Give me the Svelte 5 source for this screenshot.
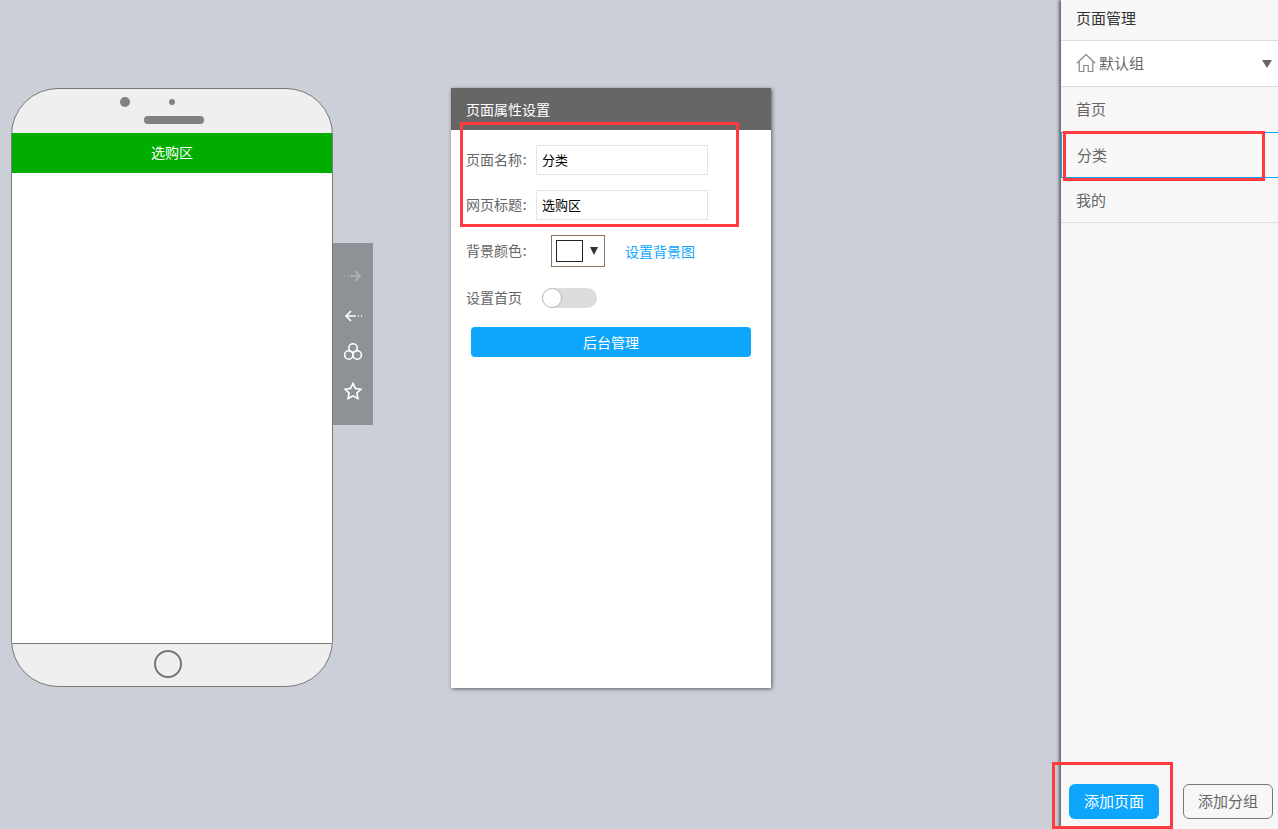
<script>
  const pages = [
    { name: '首页', active: false },
    { name: '分类', active: true },
    { name: '我的', active: false }
  ]
</script>

<div class="stage">
  <div class="phone">
    <div class="phone-top">
      <div class="sensors">
        <span class="camera"></span>
        <span class="sensor"></span>
      </div>
      <span class="speaker"></span>
    </div>
    <div class="phone-title">选购区</div>
    <div class="phone-body"></div>
    <div class="phone-bottom"><span class="home-btn"></span></div>
  </div>

  <div class="tools">
    <svg class="tool dim" viewBox="0 0 20 20">
      <path d="M1 10h1M4 10h1M7 10h10M12 5l5 5-5 5" />
    </svg>
    <svg class="tool" viewBox="0 0 20 20">
      <path d="M19 10h-1M16 10h-1M13 10H3M8 5l-5 5 5 5" />
    </svg>
    <svg class="tool" viewBox="0 0 20 20">
      <circle cx="10" cy="6" r="4.2" />
      <circle cx="5.8" cy="13" r="4.2" />
      <circle cx="14.2" cy="13" r="4.2" />
    </svg>
    <svg class="tool" viewBox="0 0 20 20">
      <path d="M10 2.4l2.4 5 5.5.8-4 3.8 1 5.5-4.9-2.7-4.9 2.7 1-5.5-4-3.8 5.500-.8z" />
    </svg>
  </div>

  <div class="settings">
    <div class="settings-head">页面属性设置</div>
    <div class="settings-body">
      <div class="field">
        <span class="label">页面名称&#8202;:</span>
        <input class="text-input" value="分类" />
      </div>
      <div class="field">
        <span class="label">网页标题&#8202;:</span>
        <input class="text-input" value="选购区" />
      </div>
      <div class="color-row">
        <span class="label">背景颜色&#8202;:</span>
        <div class="color-pick">
          <span class="swatch"></span>
          <span class="caret"></span>
        </div>
        <span class="link">设置背景图</span>
      </div>
      <div class="switch-row">
        <span class="label">设置首页</span>
        <span class="switch"><span class="knob"></span></span>
      </div>
      <button class="admin-btn">后台管理</button>
    </div>
  </div>

  <div class="pages">
    <div class="pages-head">页面管理</div>
    <div class="group">
      <svg class="house" viewBox="0 0 20 20">
        <path d="M.8 10.200L10 1.600l9.200 8.600M3.200 8.500v10h4.600v-6h4.400v6h4.600v-10" />
      </svg>
      <span>默认组</span>
      <span class="group-caret"></span>
    </div>
    {#each pages as page}
      <div class="page-row" class:active={page.active}>{page.name}</div>
    {/each}
    <div class="actions">
      <button class="add-page">添加页面</button>
      <button class="add-group">添加分组</button>
    </div>
  </div>

  <!-- annotations drawn over the screenshot -->
  <div class="mark mark-form"></div>
  <div class="mark mark-row"></div>
  <div class="mark mark-add"></div>
</div>

<style>
  :global(body) {
    margin: 0;
  }

  .stage {
    position: relative;
    display: flex;
    align-items: flex-start;
    width: 1278px;
    height: 829px;
    overflow: hidden;
    background: #cbcfd8;
    font-family: "Noto Sans CJK SC", "Noto Sans", sans-serif;
    font-size: 13px;
    color: #666;
  }

  .phone {
    display: flex;
    flex-direction: column;
    width: 320px;
    height: 597px;
    margin: 88px 0 0 11px;
    border: 1px solid #777;
    border-radius: 47px;
    overflow: hidden;
    background: #efefef;
    flex: none;
  }

  .phone-top {
    display: flex;
    flex-direction: column;
    height: 44px;
  }

  .sensors {
    display: flex;
    align-items: center;
    height: 10px;
    margin: 8px 0 0 108px;
  }

  .camera {
    width: 10px;
    height: 10px;
    border-radius: 50%;
    background: #808080;
  }

  .sensor {
    width: 6px;
    height: 6px;
    margin-left: 39px;
    border-radius: 50%;
    background: #808080;
  }

  .speaker {
    width: 60px;
    height: 8px;
    margin: 9px 0 0 132px;
    border-radius: 4px;
    background: #808080;
  }

  .phone-title {
    height: 40px;
    line-height: 39px;
    text-align: center;
    background: #02ad02;
    color: #fff;
    font-size: 14px;
  }

  .phone-body {
    height: 470px;
    background: #fff;
    border-bottom: 1px solid #777;
  }

  .phone-bottom {
    display: flex;
    justify-content: center;
    align-items: center;
    flex: 1;
    padding: 0 8px 2px 0;
  }

  .home-btn {
    width: 24px;
    height: 24px;
    border: 2px solid #777;
    border-radius: 50%;
  }

  .tools {
    display: flex;
    flex-direction: column;
    align-items: center;
    gap: 16px;
    width: 40px;
    height: 182px;
    margin-top: 243px;
    padding-top: 23px;
    box-sizing: border-box;
    background: #8e9196;
    flex: none;
  }

  .tool {
    width: 20px;
    height: 20px;
    fill: none;
    stroke: #fff;
    stroke-width: 1.6;
  }

  .tool.dim {
    margin-bottom: 4px;
    stroke: #b4b6ba;
  }

  .tool:nth-child(3) {
    margin-bottom: 3px;
  }

  .settings {
    display: flex;
    flex-direction: column;
    width: 320px;
    height: 600px;
    margin: 88px 0 0 78px;
    background: #fff;
    box-shadow: 1px 1px 4px rgba(0, 0, 0, 0.55);
    flex: none;
  }

  .settings-head {
    height: 42px;
    padding: 11px 0 0 15px;
    box-sizing: border-box;
    background: #666;
    color: #fff;
    font-size: 14px;
    line-height: 20px;
  }

  .settings-body {
    display: flex;
    flex-direction: column;
    padding: 15px 0 0 15px;
  }

  .label {
    margin-top: -2px;
    font-size: 14px;
    line-height: 20px;
    color: #666;
    white-space: nowrap;
  }

  .field {
    display: flex;
    align-items: center;
    height: 30px;
    margin-bottom: 15px;
  }

  .field .label {
    width: 70px;
  }

  .text-input {
    width: 172px;
    height: 30px;
    padding: 0 5px 2px;
    box-sizing: border-box;
    border: 1px solid #e3e3e3;
    outline: none;
    color: #000;
    font: inherit;
    font-size: 13px;
  }

  .color-row {
    display: flex;
    align-items: center;
    height: 32px;
  }

  .color-row .label {
    width: 85px;
  }

  .color-pick {
    display: flex;
    align-items: center;
    width: 54px;
    height: 32px;
    padding-left: 4px;
    box-sizing: border-box;
    border: 1px solid #8d7660;
  }

  .swatch {
    width: 27px;
    height: 22px;
    box-sizing: border-box;
    border: 1px solid #222;
  }

  .caret {
    width: 0;
    height: 0;
    margin: -1px 0 0 7px;
    border-left: 4.5px solid transparent;
    border-right: 4.5px solid transparent;
    border-top: 8px solid #333;
  }

  .link {
    margin-left: 20px;
    font-size: 14px;
    color: #0ea5fd;
  }

  .switch-row {
    display: flex;
    align-items: center;
    height: 20px;
    margin-top: 21px;
  }

  .switch-row .label {
    width: 76px;
  }

  .switch {
    display: flex;
    width: 55px;
    height: 20px;
    border-radius: 10px;
    background: #dcdcdc;
  }

  .knob {
    width: 20px;
    height: 20px;
    box-sizing: border-box;
    border: 1px solid #bbb;
    border-radius: 50%;
    background: #fff;
  }

  .admin-btn {
    width: 280px;
    height: 30px;
    margin: 19px 0 0 5px;
    padding: 0;
    border: none;
    border-radius: 4px;
    background: #0ea5fd;
    color: #fff;
    font: inherit;
    font-size: 14px;
  }

  .pages {
    display: flex;
    flex-direction: column;
    width: 217px;
    height: 829px;
    margin-left: auto;
    background: #f7f7f7;
    box-shadow: -2px 0 3px rgba(0, 0, 0, 0.55);
    flex: none;
  }

  .pages-head {
    height: 40px;
    padding-left: 15px;
    line-height: 36px;
    font-size: 15px;
    color: #333;
    border-bottom: 1px solid #ddd;
  }

  .group {
    display: flex;
    align-items: center;
    height: 45px;
    padding: 0 6px 0 15px;
    background: #fff;
    border-bottom: 1px solid #ddd;
    font-size: 15px;
    line-height: 20px;
    color: #666;
  }

  .group > span:not(.group-caret) {
    margin-top: -2px;
  }

  .house {
    width: 20px;
    height: 20px;
    margin: -2px 3px 0 0;
    fill: none;
    stroke: #888;
    stroke-width: 1.2;
  }

  .group-caret {
    width: 0;
    height: 0;
    margin-left: auto;
    border-left: 5px solid transparent;
    border-right: 5px solid transparent;
    border-top: 8px solid #666;
  }

  .page-row {
    height: 44px;
    padding-left: 15px;
    line-height: 43px;
    font-size: 15px;
    color: #666;
    border-bottom: 1px solid #ddd;
  }

  .page-row:has(+ .active) {
    border-bottom-color: transparent;
  }

  .page-row.active {
    border-top: 1px solid #0ea5fd;
    border-bottom: 1px solid #0ea5fd;
    border-left: 1px solid #0ea5fd;
  }

  .actions {
    display: flex;
    gap: 24px;
    margin-top: auto;
    padding: 0 5px 10px 8px;
  }

  .actions button {
    width: 90px;
    height: 35px;
    padding: 0 0 3px;
    border-radius: 6px;
    font: inherit;
    font-size: 15px;
  }

  .add-page {
    border: none;
    background: #0ea5fd;
    color: #fff;
  }

  .add-group {
    border: 1px solid #777;
    background: #f7f7f7;
    color: #666;
  }

  .mark {
    position: absolute;
    box-sizing: border-box;
    border: 3px solid #ff3b3f;
  }

  .mark-form {
    left: 460px;
    top: 122px;
    width: 279px;
    height: 105px;
  }

  .mark-row {
    left: 1063px;
    top: 131px;
    width: 202px;
    height: 50px;
  }

  .mark-add {
    left: 1052px;
    top: 762px;
    width: 121px;
    height: 67px;
  }
</style>
